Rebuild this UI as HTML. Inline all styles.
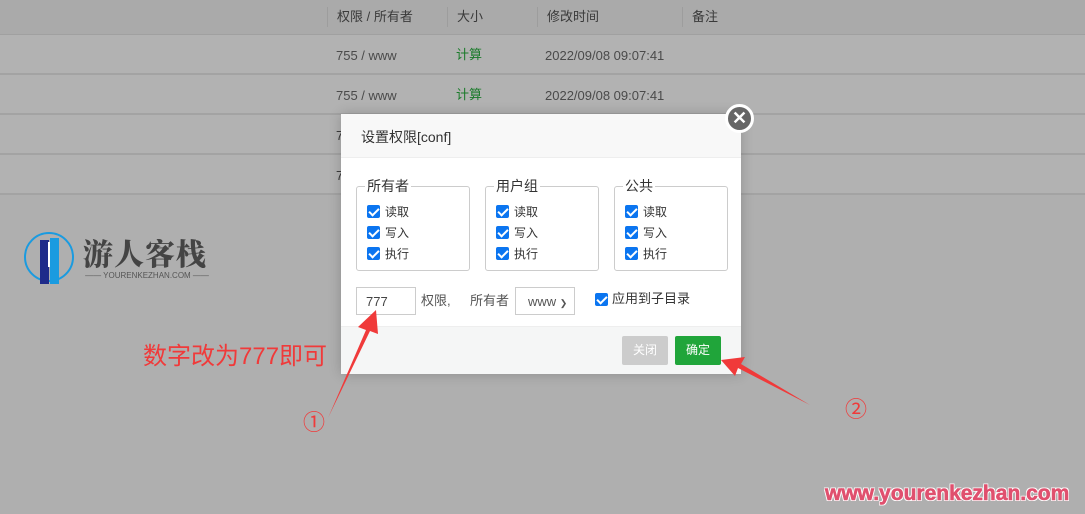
<!DOCTYPE html>
<html><head><meta charset="utf-8"><style>
*{box-sizing:border-box;margin:0;padding:0}
body{width:1085px;height:514px;overflow:hidden;background:#afafaf;font-family:"Liberation Sans","Noto Sans CJK SC",sans-serif;position:relative;font-size:13px;color:#444}
.hdr{position:absolute;left:0;top:0;width:1085px;height:35px;background:#aaa;border-bottom:1px solid #a0a0a0}
.row{position:absolute;left:0;width:1085px;height:40px;background:#b2b2b2;border-bottom:2px solid #a3a3a3}
.t{position:absolute;font-size:13px;color:#3a3a3a;white-space:nowrap;line-height:16px}
.sep{position:absolute;top:7px;width:1px;height:20px;background:#9d9d9d}
.dlg{position:absolute;left:341px;top:114px;width:400px;height:260px;background:#fff;box-shadow:0 0 12px rgba(0,0,0,.2)}
.dh{height:44px;background:#f8f8f8;border-bottom:1px solid #eee;padding:13px 0 0 20px;font-size:14px;color:#333}
.fs{position:absolute;top:72px;width:114px;height:85px;border:1px solid #ccc;border-radius:3px}
.lg{position:absolute;top:-10px;left:8px;background:#fff;padding:0 2px;font-size:14px;color:#333;line-height:18px}
.cb{position:absolute;left:10px;width:13px;height:13px;background:#0b75f0;border-radius:2px}
.cb:after{content:"";position:absolute;left:4px;top:1px;width:4px;height:8px;border:solid #fff;border-width:0 2px 2px 0;transform:rotate(45deg)}
.cl{position:absolute;left:28px;font-size:12px;color:#333;line-height:16px}
.ft{position:absolute;left:0;top:212px;width:400px;height:48px;background:#f5f6f6;border-top:1px solid #eee}
.btn{position:absolute;top:9px;height:29px;width:46px;color:#fff;font-size:12px;text-align:center;line-height:29px;border-radius:2px}
</style></head><body>
<div class="hdr"></div>
<div class="sep" style="left:327px"></div><div class="sep" style="left:447px"></div><div class="sep" style="left:537px"></div><div class="sep" style="left:682px"></div>
<div class="t" style="left:337px;top:9px">权限 / 所有者</div>
<div class="t" style="left:457px;top:9px">大小</div>
<div class="t" style="left:547px;top:9px">修改时间</div>
<div class="t" style="left:692px;top:9px">备注</div>
<div class="row" style="top:35px"></div>
<div class="row" style="top:75px"></div>
<div class="row" style="top:115px"></div>
<div class="row" style="top:155px"></div>
<div class="t" style="left:336px;top:48px;color:#4a4a4a">755 / www</div>
<div class="t" style="left:456px;top:47px;color:#1a7a2a">计算</div>
<div class="t" style="left:545px;top:48px;color:#4a4a4a">2022/09/08 09:07:41</div>
<div class="t" style="left:336px;top:88px;color:#4a4a4a">755 / www</div>
<div class="t" style="left:456px;top:87px;color:#1a7a2a">计算</div>
<div class="t" style="left:545px;top:88px;color:#4a4a4a">2022/09/08 09:07:41</div>
<div class="t" style="left:336px;top:128px">7</div>
<div class="t" style="left:336px;top:168px">7</div>

<svg style="position:absolute;left:24px;top:232px" width="52" height="52" viewBox="0 0 52 52">
<circle cx="25" cy="25" r="24" fill="none" stroke="#1a9be0" stroke-width="2"/>
<rect x="16" y="8" width="9" height="44" fill="#1f2b8a"/><rect x="26" y="6" width="9" height="46" fill="#1a9be0"/>
<rect x="24" y="10" width="2" height="25" fill="#fff"/></svg>
<div style="position:absolute;left:83px;top:230px;font-family:'Noto Serif CJK SC',serif;font-weight:900;font-size:30px;color:#444;letter-spacing:1px">游人客栈</div>
<div style="position:absolute;left:83px;top:271px;width:128px;height:10px;font-size:8px;line-height:10px;color:#555;text-align:center;white-space:nowrap">—— YOURENKEZHAN.COM ——</div>
<div style="position:absolute;left:143px;top:336px;font-size:24px;color:#f03a3a">数字改为777即可</div>
<div style="position:absolute;left:303px;top:405px;font-size:22px;color:#f03a3a">①</div>
<div style="position:absolute;left:845px;top:392px;font-size:22px;color:#f03a3a">②</div>
<div style="position:absolute;left:825px;top:482px;font-size:21px;font-weight:bold;color:#e0506e;-webkit-text-stroke:0.6px #e0506e;text-shadow:1px 1px 0 #fff,-1px -1px 0 #fff,1px -1px 0 #fff,-1px 1px 0 #fff">www.yourenkezhan.com</div>

<div class="dlg">
<div class="dh">设置权限[conf]</div>
<div class="fs" style="left:15px"><span class="lg">所有者</span>
<div class="cb" style="top:18px"></div><span class="cl" style="top:17px">读取</span>
<div class="cb" style="top:39px"></div><span class="cl" style="top:38px">写入</span>
<div class="cb" style="top:60px"></div><span class="cl" style="top:59px">执行</span></div>
<div class="fs" style="left:144px"><span class="lg">用户组</span>
<div class="cb" style="top:18px"></div><span class="cl" style="top:17px">读取</span>
<div class="cb" style="top:39px"></div><span class="cl" style="top:38px">写入</span>
<div class="cb" style="top:60px"></div><span class="cl" style="top:59px">执行</span></div>
<div class="fs" style="left:273px"><span class="lg">公共</span>
<div class="cb" style="top:18px"></div><span class="cl" style="top:17px">读取</span>
<div class="cb" style="top:39px"></div><span class="cl" style="top:38px">写入</span>
<div class="cb" style="top:60px"></div><span class="cl" style="top:59px">执行</span></div>
<div style="position:absolute;left:15px;top:173px;width:60px;height:28px;border:1px solid #ccc;padding:6px 0 0 9px;font-size:13px">777</div>
<div class="t" style="left:80px;top:179px;color:#555">权限,</div>
<div class="t" style="left:129px;top:179px;color:#555">所有者</div>
<div style="position:absolute;left:174px;top:173px;width:60px;height:28px;border:1px solid #ccc;padding:6px 0 0 12px;font-size:13px;color:#555">www <span style="font-size:9px">&#10095;</span></div>
<div class="cb" style="left:254px;top:179px"></div>
<div class="t" style="left:271px;top:177px;color:#333">应用到子目录</div>
<div class="ft">
<div class="btn" style="left:281px;background:#ccc">关闭</div>
<div class="btn" style="left:334px;background:#20a53a">确定</div>
</div>
</div>
<div style="position:absolute;left:725px;top:104px;width:29px;height:29px;border-radius:50%;background:#666;border:3px solid #fff;color:#fff;font-size:18px;line-height:22px;text-align:center;font-weight:bold">✕</div>

<svg style="position:absolute;left:0;top:0" width="1085" height="514">
<polygon points="328,418 366,330 358,327 376,310 378,334 370,331" fill="#f03a3a"/>
<polygon points="810,405 738,368 735,376 721,360 745,357 741,364" fill="#f03a3a"/>
</svg>
</body></html>
